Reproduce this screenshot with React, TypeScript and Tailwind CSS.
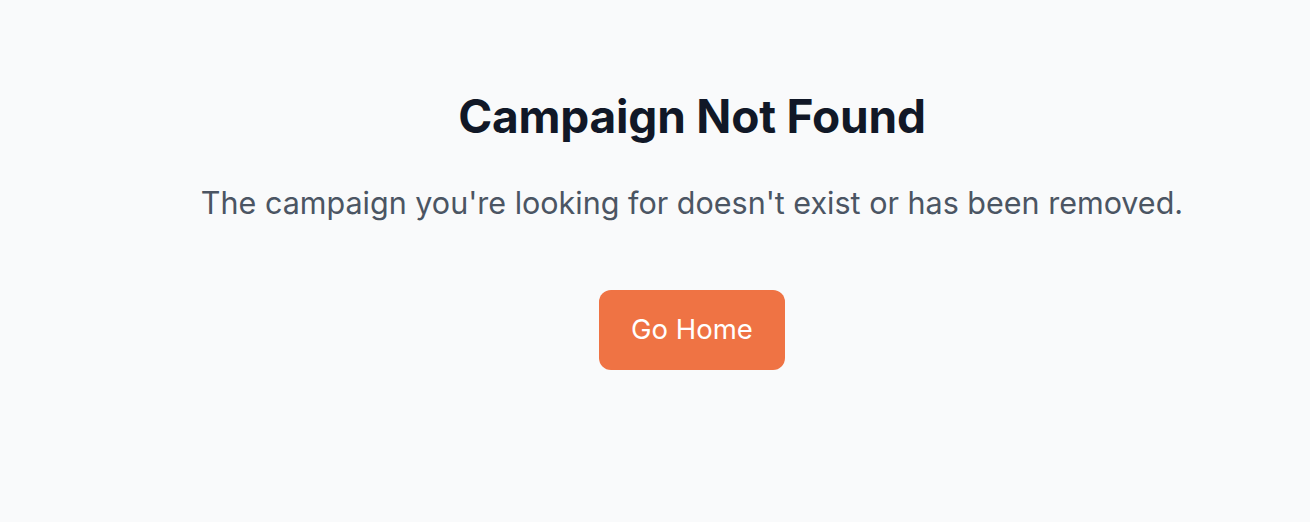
export default function App() {
  return (
    <div
      className="min-h-[522px] bg-[#f9fafb] flex justify-center pl-[74px]"
      style={{ fontFamily: 'Inter, "Noto Sans", sans-serif' }}
    >
      <div className="flex flex-col items-center pt-[86px]">
        <h1 className="text-[46px] leading-[60px] font-bold text-[#111827] tracking-[-0.2px]">
          Campaign Not Found
        </h1>
        <p className="mt-[37px] text-[30.5px] leading-[40px] text-[#4b5563]">
          The campaign you're looking for doesn't exist or has been removed.
        </p>
        <button className="mt-[67px] h-[80px] w-[186px] rounded-[12px] bg-[#ef7344] text-white text-[27.5px]">
          Go Home
        </button>
      </div>
    </div>
  );
}
